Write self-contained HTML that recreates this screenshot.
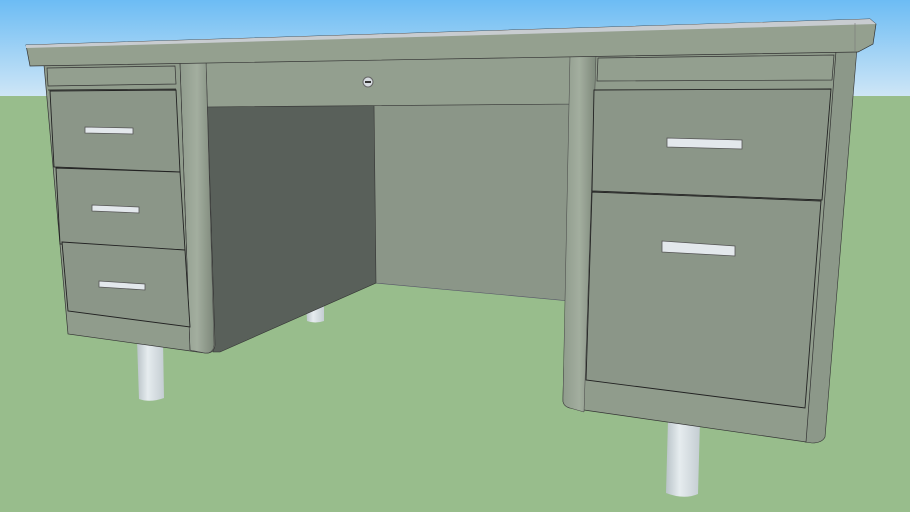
<!DOCTYPE html>
<html><head><meta charset="utf-8"><style>html,body{margin:0;padding:0;width:910px;height:512px;overflow:hidden}</style></head>
<body>
<svg width="910" height="512" viewBox="0 0 910 512" xmlns="http://www.w3.org/2000/svg">
<defs>
<linearGradient id="sky" x1="0" y1="0" x2="0" y2="1"><stop offset="0" stop-color="#6cbcf4"/><stop offset="1" stop-color="#cfe6f6"/></linearGradient>
<linearGradient id="leg" x1="0" y1="0" x2="1" y2="0"><stop offset="0" stop-color="#b9c3c8"/><stop offset="0.4" stop-color="#e6ecef"/><stop offset="1" stop-color="#c4cdd2"/></linearGradient>
<linearGradient id="col" x1="0" y1="0" x2="1" y2="0"><stop offset="0" stop-color="#8f9b8c"/><stop offset="0.5" stop-color="#a3ae9f"/><stop offset="1" stop-color="#7d887a"/></linearGradient>
</defs>
<rect width="910" height="97" fill="url(#sky)"/>
<rect y="96" width="910" height="416" fill="#98bd8c"/>
<!-- legs -->
<path d="M137,340 L163,340 L164,398 Q150,403 139,399 Z" fill="url(#leg)"/>
<path d="M306,300 L324,300 L324,321 Q315,324 307,321 Z" fill="url(#leg)"/>
<path d="M668,420 L700,420 L698,494 Q684,500 666,493 Z" fill="url(#leg)"/>
<!-- back panel -->
<polygon points="373,104 570,104 570,301 375,283" fill="#8b9688" stroke="#556" stroke-width="0.6"/>
<!-- dark side -->
<polygon points="205,106 374,104 376,283 220,352 213,352" fill="#59605a" stroke="#333" stroke-width="0.6"/>
<!-- apron -->
<polygon points="200,62 574,56 572,104 205,107" fill="#939f8f" stroke="#333" stroke-width="0.6"/>
<circle cx="368" cy="82" r="5" fill="#d6dbe0" stroke="#666" stroke-width="1"/>
<rect x="365" y="81" width="6" height="2" fill="#333"/>
<!-- left pedestal front -->
<path d="M44,65 L206,62 L215,345 Q214,354 205,353 L68,334 Z" fill="#909c8c" stroke="#333" stroke-width="0.7"/>
<path d="M180,63 L206,62 L214,345 Q213,354 205,353 L190,350 Z" fill="url(#col)" stroke="#444" stroke-width="0.5"/>
<line x1="180" y1="63" x2="190" y2="350" stroke="#333" stroke-width="0.6"/>
<polygon points="47,68 175,66 176,84 48,86" fill="#939f8f" stroke="#333" stroke-width="0.7"/>
<line x1="48" y1="90" x2="176" y2="89" stroke="#222" stroke-width="0.8"/>
<polygon points="50,91 176,90 180,172 54,167" fill="#8b9688" stroke="#222" stroke-width="0.9"/>
<polygon points="56,168 180,172 185,250 60,244" fill="#8b9688" stroke="#222" stroke-width="0.9"/>
<polygon points="62,242 185,250 190,327 68,311" fill="#8b9688" stroke="#222" stroke-width="0.9"/>
<!-- right pedestal -->
<path d="M835,51 L857,48 L825,437 Q822,443 812,443 L805,442 Z" fill="#8c9889" stroke="#333" stroke-width="0.6"/>
<path d="M572,56 L836,51 L806,442 L570,408 Q562,406 563,398 Z" fill="#909c8c" stroke="#333" stroke-width="0.7"/>
<path d="M570,56 L596,56 L584,412 L570,408 Q562,406 563,398 Z" fill="url(#col)" stroke="#444" stroke-width="0.5"/>
<polygon points="598,58 834,55 832,80 597,81" fill="#939f8f" stroke="#333" stroke-width="0.7"/>
<polygon points="594,90 831,89 822,200 592,191" fill="#8b9688" stroke="#222" stroke-width="0.9"/>
<polygon points="592,192 821,201 805,408 586,380" fill="#8b9688" stroke="#222" stroke-width="0.9"/>
<!-- top slab -->
<polygon points="26,45 870,19 876,24 873,44 858,52 30,66" fill="#94a08f" stroke="#333" stroke-width="0.7"/>
<polygon points="26,45 870,19 876,24 26,48" fill="#c8ccd0"/>
<line x1="855" y1="23" x2="855" y2="51" stroke="#777" stroke-width="0.6"/>
<!-- handles -->
<g fill="#e3e8ec" stroke="#555" stroke-width="0.8">
<polygon points="85,127 133,128 133,134 85,133"/>
<polygon points="92,205 139,207 139,213 92,211"/>
<polygon points="99,281 145,284 145,290 99,287"/>
<polygon points="667,138 742,140 742,149 667,147"/>
<polygon points="662,241 735,246 735,256 662,252"/>
</g>
</svg>
</body></html>
